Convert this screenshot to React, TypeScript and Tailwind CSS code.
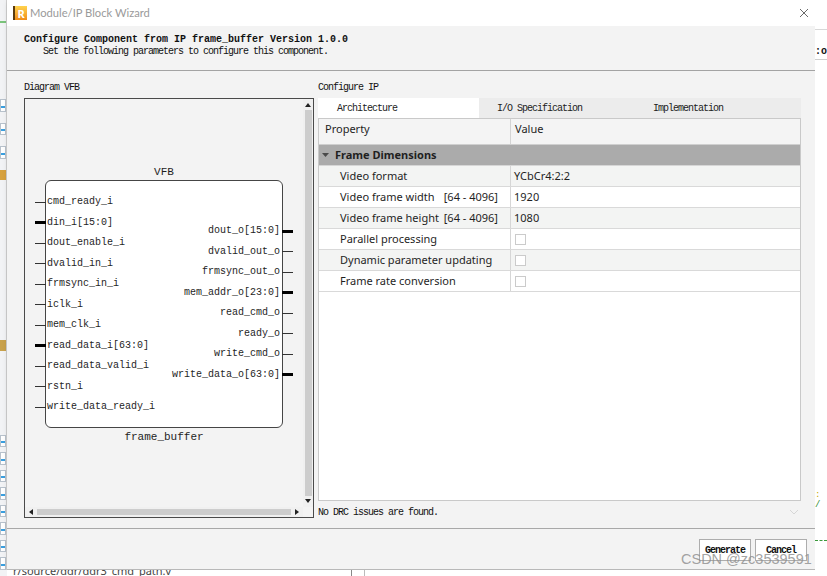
import React from 'react';

const mono = "font-['Liberation_Mono',monospace]";
const sans = "font-['Noto_Sans',sans-serif]";

const leftPins: [string, boolean][] = [
  ['cmd_ready_i', false],
  ['din_i[15:0]', true],
  ['dout_enable_i', false],
  ['dvalid_in_i', false],
  ['frmsync_in_i', false],
  ['iclk_i', false],
  ['mem_clk_i', false],
  ['read_data_i[63:0]', true],
  ['read_data_valid_i', false],
  ['rstn_i', false],
  ['write_data_ready_i', false],
];

const rightPins: [string, boolean][] = [
  ['dout_o[15:0]', true],
  ['dvalid_out_o', false],
  ['frmsync_out_o', false],
  ['mem_addr_o[23:0]', true],
  ['read_cmd_o', false],
  ['ready_o', false],
  ['write_cmd_o', false],
  ['write_data_o[63:0]', true],
];

type Row = { name: string; range?: string; value?: string; check?: boolean };

const rows: Row[] = [
  { name: 'Video format', value: 'YCbCr4:2:2' },
  { name: 'Video frame width', range: '[64 - 4096]', value: '1920' },
  { name: 'Video frame height', range: '[64 - 4096]', value: '1080' },
  { name: 'Parallel processing', check: true },
  { name: 'Dynamic parameter updating', check: true },
  { name: 'Frame rate conversion', check: true },
];

function Stub({ bus }: { bus: boolean }) {
  return <span className={bus ? 'w-[11px] h-[3px] bg-black shrink-0' : 'w-[11px] h-px bg-[#333] shrink-0'} />;
}

function Arrow({ dir }: { dir: 'up' | 'down' | 'left' | 'right' }) {
  const pts = {
    up: '0,5 3,1 6,5',
    down: '0,1 6,1 3,5',
    left: '5,0 5,6 1,3',
    right: '1,0 1,6 5,3',
  }[dir];
  return (
    <svg width="6" height="6" viewBox="0 0 6 6" className="shrink-0">
      <polygon points={pts} fill="#222" />
    </svg>
  );
}

function Diagram() {
  return (
    <div className="w-[290px] h-[420px] border border-[#4a4a4a] flex flex-col bg-[#f3f3f3]">
      <div className="flex flex-1 min-h-0">
        <div className="flex-1 overflow-hidden">
          <div className={`ml-[20px] w-[238px] pt-[66px] flex flex-col items-center text-[#1e1e1e] ${mono}`}>
            <div className="text-[11px] leading-[14px] h-[14px]">VFB</div>
            <div className="mt-px w-[238px] h-[248px] bg-white border border-[#454545] rounded-[6px] flex justify-between text-[10px]">
              <div className="flex flex-col pt-[11px]">
                {leftPins.map(([n, bus]) => (
                  <div key={n} className="h-[20.5px] flex items-center">
                    <span className="-ml-[11px] flex items-center">
                      <Stub bus={bus} />
                    </span>
                    <span className="ml-px leading-none whitespace-pre">{n}</span>
                  </div>
                ))}
              </div>
              <div className="flex flex-col items-end pt-[40px]">
                {rightPins.map(([n, bus]) => (
                  <div key={n} className="h-[20.5px] flex items-center">
                    <span className="mr-[2px] leading-none whitespace-pre">{n}</span>
                    <span className="-mr-[11px] flex items-center">
                      <Stub bus={bus} />
                    </span>
                  </div>
                ))}
              </div>
            </div>
            <div className="mt-[2px] text-[11px] leading-[14px]">frame_buffer</div>
          </div>
        </div>
        <div className="w-[10px] flex flex-col items-center bg-[#f0f0f0] py-[3px]">
          <Arrow dir="up" />
          <div className="w-[7px] flex-1 bg-[#cdcdcd] my-[2px]" />
          <Arrow dir="down" />
        </div>
      </div>
      <div className="h-[10px] flex">
        <div className="flex-1 flex items-center px-[3px] bg-[#f0f0f0]">
          <Arrow dir="left" />
          <div className="flex-1 h-[6px] bg-[#cdcdcd] mx-[3px]" />
          <Arrow dir="right" />
        </div>
        <div className="w-[10px] bg-[#f3f3f3]" />
      </div>
    </div>
  );
}

function PropertyTable() {
  return (
    <div className={`h-[383px] bg-white border border-[#c9c9c9] flex flex-col text-[11px] text-[#1f1f1f] ${sans}`}>
      <div className="h-[26px] shrink-0 flex bg-[#f4f4f4] border-b border-[#cfcfcf]">
        <div className="w-[192px] border-r border-[#d4d4d4] pl-[6px] pb-[5px] flex items-center">Property</div>
        <div className="flex-1 pl-[4px] pb-[5px] flex items-center">Value</div>
      </div>
      <div className="h-[21px] shrink-0 flex items-center bg-[#ababab] border-b border-[#d6d6d6]">
        <svg width="7" height="5" viewBox="0 0 7 5" className="ml-[3px]">
          <polygon points="0,0 7,0 3.5,4" fill="#4a4a4a" />
        </svg>
        <span className="ml-[6px] font-bold">Frame Dimensions</span>
      </div>
      {rows.map((r, i) => (
        <div
          key={r.name}
          className={`h-[21px] shrink-0 flex border-b border-[#d9d9d9] ${i % 2 === 0 ? 'bg-[#f3f4f3]' : 'bg-white'}`}
        >
          <div className="w-[192px] border-r border-[#d6d6d6] pl-[21px] pr-[12px] flex items-center justify-between whitespace-nowrap">
            <span>{r.name}</span>
            {r.range && <span>{r.range}</span>}
          </div>
          <div className="flex-1 pl-[3px] flex items-center">
            {r.check ? (
              <span className="ml-px w-[11px] h-[11px] bg-white border border-[#cbcbcb]" />
            ) : (
              <span>{r.value}</span>
            )}
          </div>
        </div>
      ))}
    </div>
  );
}

export default function App() {
  const tabs = [
    { label: 'Architecture', pl: 'pl-[19px]', active: true },
    { label: 'I/O Specification', pl: 'pl-[18px]', active: false },
    { label: 'Implementation', pl: 'pl-[13px]', active: false },
  ];

  return (
    <div className="relative w-[827px] h-[576px] overflow-hidden flex flex-col bg-white">
      <div className="flex h-[570px]">
        {/* background app, left edge */}
        <div className="w-[7px] bg-[#f2f3f5] flex flex-col items-start border-r border-[#d0d0d0]">
          <div className="h-[26px] border-b-2 border-[#7bc47b] w-full" />
          <div className="h-[74px]" />
          {[0, 1, 2].map((k) => (
            <div key={k} className="mt-[11px] h-[14px] w-[6px] border border-[#b8c2cc] bg-white flex items-end">
              <span className="w-[4px] h-[2px] bg-[#3aa0e0] mb-[3px]" />
            </div>
          ))}
          <div className="mt-[11px] h-[12px] w-[6px] bg-[#d7a23f]" />
          <div className="mt-[160px] h-[12px] w-[6px] bg-[#c9a24c]" />
          <div className="h-[90px]" />
          {[0, 1, 2, 3, 4, 5, 6, 7].map((k) => (
            <div key={k} className="mt-[5px] h-[14px] w-[6px] border border-[#b8c2cc] bg-white flex items-end">
              <span className="w-[4px] h-[2px] bg-[#3aa0e0] mb-[3px]" />
            </div>
          ))}
        </div>

        {/* dialog */}
        <div className="w-[813px] flex flex-col bg-[#f3f3f3] border-b border-[#b8b8b8] shadow-[2px_2px_6px_rgba(0,0,0,0.25)]">
          <div className="h-[26px] bg-white flex items-center pl-[6px] pr-[6px]">
            <div className="w-[14px] h-[14px] bg-gradient-to-b from-[#ffd34d] to-[#f08c16] border-l-2 border-[#5a3a10] flex items-center justify-center">
              <span className={`text-white text-[11px] font-bold leading-none ${sans}`}>R</span>
            </div>
            <span className="ml-[3px] text-[11.2px] text-[#9a9a9a] font-['Lato',sans-serif]">Module/IP Block Wizard</span>
            <svg width="10" height="10" viewBox="0 0 10 10" className="ml-auto">
              <path d="M1 1 L9 9 M9 1 L1 9" stroke="#6a6a6a" strokeWidth="1" />
            </svg>
          </div>

          <div className={`h-[45px] border-b border-[#a3a3a3] pl-[17px] pt-[8px] text-[10px] leading-[11px] text-[#111] ${mono}`}>
            <div className="font-bold">Configure Component from IP frame_buffer Version 1.0.0</div>
            <div className="mt-px pl-[19px] tracking-[-1px]">Set the following parameters to configure this component.</div>
          </div>

          <div className={`h-[457px] flex pl-[17px] pt-[11px] gap-[4px] ${mono}`}>
            <div className="flex flex-col">
              <div className="h-[12px] leading-[12px] text-[10px] tracking-[-1px] text-[#111] mb-[4px]">Diagram VFB</div>
              <Diagram />
            </div>
            <div className="w-[483px] flex flex-col">
              <div className="h-[12px] leading-[12px] text-[10px] tracking-[-1px] text-[#111] mb-[4px]">Configure IP</div>
              <div className="h-[20px] flex bg-[#ececec] text-[10px] tracking-[-1px] text-[#222]">
                {tabs.map((t) => (
                  <div
                    key={t.label}
                    className={`w-[161px] flex items-center ${t.pl} ${t.active ? 'bg-white' : ''}`}
                  >
                    {t.label}
                  </div>
                ))}
              </div>
              <PropertyTable />
              <div className="mt-[5px] h-[12px] flex items-center text-[10px] tracking-[-1px] text-[#111]">
                <span>No DRC issues are found.</span>
                <svg width="10" height="6" viewBox="0 0 10 6" className="ml-auto mr-[2px]">
                  <path d="M1 1 L5 5 L9 1" stroke="#d6d6d6" fill="none" />
                </svg>
              </div>
            </div>
          </div>

          <div className="flex-1 border-t border-[#a8a8a8] flex justify-end items-start pt-[10px] pr-[8px] gap-[4px]">
            {['Generate', 'Cancel'].map((b) => (
              <button
                key={b}
                type="button"
                className={`w-[52px] h-[22px] bg-white border border-[#adadad] text-[10px] font-bold tracking-[-1px] text-[#111] ${mono}`}
              >
                {b}
              </button>
            ))}
          </div>
        </div>

        {/* background app, right edge */}
        <div className={`flex-1 bg-white flex flex-col ${mono}`}>
          <div className="h-[30px] border-b border-[#d8d8d8]" />
          <div className="h-[30px] border-b border-[#cfcfcf] flex items-end text-[10px] font-bold leading-[14px] text-[#111]">:o</div>
          <div className="h-[430px]" />
          <div className="text-[9px] leading-[10px] text-[#c9a800]">:</div>
          <div className="text-[9px] leading-[10px] text-[#2f8f2f]">/</div>
          <div className="h-[30px]" />
          <div className="border-t border-dashed border-[#3c9a3c] w-full" />
        </div>
      </div>

      {/* background app, bottom edge */}
      <div className="h-[6px] overflow-hidden flex bg-white">
        <div className="w-[7px] bg-[#f2f3f5]" />
        <div className={`ml-[6px] -mt-[5px] text-[11px] leading-[12px] text-[#444] ${sans}`}>r/source/ddr/ddr3_cmd_path.v</div>
        <div className="ml-[180px] w-px bg-[#888]" />
        <div className="ml-[12px] w-px bg-[#bbb]" />
      </div>

      {/* watermark */}
      <div className="absolute left-[681px] top-[550px] text-[14.5px] leading-[18px] text-[#8c8c8c]/80 pointer-events-none font-['Liberation_Sans',sans-serif]">
        CSDN @zc3539591
      </div>
    </div>
  );
}
